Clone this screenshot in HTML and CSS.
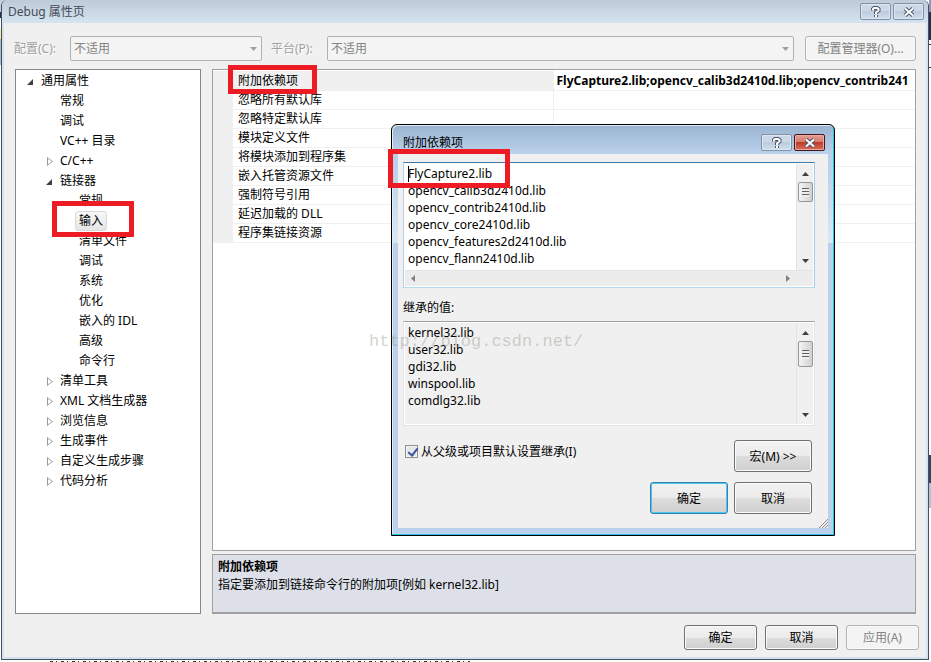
FILE: index.html
```html
<!DOCTYPE html>
<html lang="zh-CN">
<head>
  <meta charset="UTF-8">
  <meta name="viewport" content="width=device-width, initial-scale=1.0">
  <title>Debug 属性页</title>
  <link rel="stylesheet" href="styles.css">
</head>
<body>
  <main class="window">
    <header class="titlebar">
      <h1>Debug 属性页</h1>
      <div class="title-buttons">
        <button type="button" class="cap-btn" aria-label="帮助">
          <svg width="12" height="12" viewBox="0 0 12 12"><path class="halo" d="M3 4.5V3L4 2H7L8.5 3V4.5L6 6.5V8M6 9V11"/><path class="glyph" d="M3 4.5V3L4 2H7L8.5 3V4.5L6 6.5V8M6 9V11"/></svg>
        </button>
        <button type="button" class="cap-btn" aria-label="关闭">
          <svg width="12" height="12" viewBox="0 0 12 12"><path class="halo" d="M2 2.5L10 9.5M10 2.5L2 9.5"/><path class="glyph" d="M2 2.5L10 9.5M10 2.5L2 9.5"/></svg>
        </button>
      </div>
    </header>

    <!-- Configuration bar -->
    <div class="config-bar">
      <label for="config">配置(C):</label>
      <div class="combo combo-config">
        <select id="config" disabled><option>不适用</option></select>
        <svg width="7" height="4" viewBox="0 0 7 4"><path d="M0 0H7L3.5 4Z" fill="#a0a0a0"/></svg>
      </div>
      <label for="platform">平台(P):</label>
      <div class="combo combo-platform">
        <select id="platform" disabled><option>不适用</option></select>
        <svg width="7" height="4" viewBox="0 0 7 4"><path d="M0 0H7L3.5 4Z" fill="#a0a0a0"/></svg>
      </div>
      <button type="button" class="btn btn-manager" disabled>配置管理器(O)...</button>
    </div>

    <div class="content">
      <!-- Tree -->
      <nav class="tree">
        <ul>
          <li><div class="node open"><a href="#">通用属性</a></div>
            <ul>
              <li><div class="node"><a href="#">常规</a></div></li>
              <li><div class="node"><a href="#">调试</a></div></li>
              <li><div class="node"><a href="#">VC++ 目录</a></div></li>
              <li><div class="node closed"><a href="#">C/C++</a></div></li>
              <li><div class="node open"><a href="#">链接器</a></div>
                <ul>
                  <li><div class="node"><a href="#">常规</a></div></li>
                  <li><div class="node selected"><a href="#">输入</a><span class="mark mark-tree"></span></div></li>
                  <li><div class="node"><a href="#">清单文件</a></div></li>
                  <li><div class="node"><a href="#">调试</a></div></li>
                  <li><div class="node"><a href="#">系统</a></div></li>
                  <li><div class="node"><a href="#">优化</a></div></li>
                  <li><div class="node"><a href="#">嵌入的 IDL</a></div></li>
                  <li><div class="node"><a href="#">高级</a></div></li>
                  <li><div class="node"><a href="#">命令行</a></div></li>
                </ul>
              </li>
              <li><div class="node closed"><a href="#">清单工具</a></div></li>
              <li><div class="node closed"><a href="#">XML 文档生成器</a></div></li>
              <li><div class="node closed"><a href="#">浏览信息</a></div></li>
              <li><div class="node closed"><a href="#">生成事件</a></div></li>
              <li><div class="node closed"><a href="#">自定义生成步骤</a></div></li>
              <li><div class="node closed"><a href="#">代码分析</a></div></li>
            </ul>
          </li>
        </ul>
      </nav>

      <!-- Properties -->
      <section class="props">
        <div class="grid-box">
          <table class="grid">
            <colgroup><col class="col-gutter"><col class="col-name"><col></colgroup>
            <tbody>
              <tr class="current"><td></td><th scope="row">附加依赖项</th><td>FlyCapture2.lib;opencv_calib3d2410d.lib;opencv_contrib241</td></tr>
              <tr><td></td><th scope="row">忽略所有默认库</th><td></td></tr>
              <tr><td></td><th scope="row">忽略特定默认库</th><td></td></tr>
              <tr><td></td><th scope="row">模块定义文件</th><td></td></tr>
              <tr><td></td><th scope="row">将模块添加到程序集</th><td></td></tr>
              <tr><td></td><th scope="row">嵌入托管资源文件</th><td></td></tr>
              <tr><td></td><th scope="row">强制符号引用</th><td></td></tr>
              <tr><td></td><th scope="row">延迟加载的 DLL</th><td></td></tr>
              <tr><td></td><th scope="row">程序集链接资源</th><td></td></tr>
            </tbody>
          </table>
        </div>
        <div class="hint">
          <h2>附加依赖项</h2>
          <p>指定要添加到链接命令行的附加项[例如 kernel32.lib]</p>
        </div>
        <span class="mark mark-prop"></span>
      </section>
    </div>

    <footer class="footer">
      <button type="button" class="btn">确定</button>
      <button type="button" class="btn">取消</button>
      <button type="button" class="btn" disabled>应用(A)</button>
    </footer>
  </main>

  <!-- Additional dependencies dialog -->
  <div class="dialog" role="dialog" aria-labelledby="dialog-title">
    <header class="dialog-title">
      <h2 id="dialog-title">附加依赖项</h2>
      <div class="title-buttons">
        <button type="button" class="cap-btn" aria-label="帮助">
          <svg width="12" height="12" viewBox="0 0 12 12"><path class="halo" d="M3 4.5V3L4 2H7L8.5 3V4.5L6 6.5V8M6 9V11"/><path class="glyph" d="M3 4.5V3L4 2H7L8.5 3V4.5L6 6.5V8M6 9V11"/></svg>
        </button>
        <button type="button" class="cap-btn close" aria-label="关闭">
          <svg width="12" height="12" viewBox="0 0 12 12"><path class="halo" d="M2 2.5L10 9.5M10 2.5L2 9.5"/><path class="glyph" d="M2 2.5L10 9.5M10 2.5L2 9.5"/></svg>
        </button>
      </div>
    </header>
    <div class="dialog-body">
      <div class="textbox active">
        <div class="text-row">
          <textarea aria-label="附加依赖项" wrap="off" spellcheck="false">FlyCapture2.lib
opencv_calib3d2410d.lib
opencv_contrib2410d.lib
opencv_core2410d.lib
opencv_features2d2410d.lib
opencv_flann2410d.lib</textarea>
          <div class="vscroll">
            <svg width="7" height="4" viewBox="0 0 7 4"><path d="M0 4H7L3.5 0Z" fill="#404040"/></svg>
            <span class="thumb"></span>
            <svg width="7" height="4" viewBox="0 0 7 4"><path d="M0 0H7L3.5 4Z" fill="#404040"/></svg>
          </div>
        </div>
        <div class="hscroll">
          <svg width="4" height="7" viewBox="0 0 4 7"><path d="M4 0V7L0 3.5Z" fill="#808080"/></svg>
          <svg width="4" height="7" viewBox="0 0 4 7"><path d="M0 0V7L4 3.5Z" fill="#808080"/></svg>
        </div>
        <span class="caret"></span>
      </div>

      <label class="inherited-label" for="inherited">继承的值:</label>
      <div class="textbox">
        <div class="text-row">
          <textarea id="inherited" wrap="off" readonly>kernel32.lib
user32.lib
gdi32.lib
winspool.lib
comdlg32.lib</textarea>
          <div class="vscroll">
            <svg width="7" height="4" viewBox="0 0 7 4"><path d="M0 4H7L3.5 0Z" fill="#404040"/></svg>
            <span class="thumb"></span>
            <svg width="7" height="4" viewBox="0 0 7 4"><path d="M0 0H7L3.5 4Z" fill="#404040"/></svg>
          </div>
        </div>
      </div>

      <div class="inherit-row">
        <input type="checkbox" id="inherit" checked>
        <label for="inherit">从父级或项目默认设置继承(I)</label>
        <button type="button" class="btn">宏(M) &gt;&gt;</button>
      </div>
      <div class="dialog-actions">
        <button type="button" class="btn default">确定</button>
        <button type="button" class="btn">取消</button>
      </div>
      <svg class="grip" width="9" height="9" viewBox="0 0 9 9"><path d="M0 9L9 0M3 9L9 3M6 9L9 6" stroke="#8c8c8c"/></svg>
    </div>
    <span class="mark mark-dialog"></span>
    <span class="watermark">http://blog.csdn.net/</span>
  </div>
</body>
</html>
```
FILE: styles.css
```css
* {
  box-sizing: border-box;
}

body {
  margin: 0;
  min-height: 100vh;
  padding: 0 2px 2px 1px;
  display: flex;
  background:
    linear-gradient(#8d9ab8 0 12px, #1f3150 12px 40px, #fff 40px 44px, #1f3150 44px 45px, #fff 45px 67px, #1f3150 67px 68px, #fff 68px 455px, #2f4468 455px 483px, #b4c1d6 483px 508px, #fff 508px) right top / 2px 100% no-repeat,
    linear-gradient(#c5cede 0 12px, #1f3150 12px 18px, #fff 18px 28px, #ffe8a0 28px 39px, #a9b7cb 39px 65px, #fff 65px) left top / 8px 100% no-repeat,
    repeating-linear-gradient(90deg, #333 0 3px, #fff 3px 6px, #333 6px 7px, #fff 7px 11px) 50px bottom / 420px 1px no-repeat,
    #fff;
  color: #000;
  font-family: "Noto Sans", "Noto Sans CJK SC", sans-serif;
  font-size: 12px;
  line-height: 17px;
}

h1, h2, p, ul {
  margin: 0;
  padding: 0;
  font-size: 12px;
  font-weight: normal;
}

ul {
  list-style: none;
}

a {
  color: inherit;
  text-decoration: none;
}

svg {
  display: block;
  flex: none;
}

button, select, textarea {
  font: inherit;
  color: inherit;
}

/* Main window */
.window {
  flex: 1;
  min-width: 0;
  display: flex;
  flex-direction: column;
  background: #f0f0f0;
  border: 1px solid #45505c;
  border-top: 0;
  border-radius: 6px 6px 0 0;
  box-shadow: inset 0 0 0 2px #d5e2f0;
}

.titlebar {
  display: flex;
  align-items: center;
  justify-content: space-between;
  height: 23px;
  padding: 0 4px 0 6px;
  border-radius: 6px 6px 0 0;
  background: linear-gradient(#bdcbd9, #d6e3f1);
  color: #444c55;
}

.title-buttons {
  display: flex;
  gap: 2px;
}

.cap-btn {
  display: flex;
  align-items: center;
  justify-content: center;
  width: 31px;
  height: 17px;
  padding: 0;
  border: 1px solid #8291a8;
  border-radius: 2px;
  background: linear-gradient(#cbd8e6 50%, #bccbdd 50%, #d0deec);
  box-shadow: inset 0 0 0 1px #dce7f2;
}

.halo {
  fill: none;
  stroke: #4c566b;
  stroke-width: 4;
}

.glyph {
  fill: none;
  stroke: #fff;
  stroke-width: 2;
}

.config-bar {
  display: flex;
  align-items: center;
  padding: 13px 12px 8px 12px;
  color: #a0a0a0;
}

.config-bar label {
  width: 56px;
  text-shadow: 1px 1px #fff;
}

.combo {
  position: relative;
}

.combo-config {
  width: 192px;
  margin-right: 9px;
}

.combo-platform {
  flex: 1;
  margin-right: 11px;
}

.combo select {
  appearance: none;
  display: block;
  width: 100%;
  height: 25px;
  padding: 0 3px;
  border: 1px solid #adb2b5;
  border-radius: 2px;
  background: #f4f4f4;
  color: #838383;
  opacity: 1;
}

.combo svg {
  position: absolute;
  right: 5px;
  top: 11px;
}

.btn {
  width: 73px;
  height: 25px;
  padding: 0;
  border: 1px solid #707070;
  border-radius: 3px;
  background: linear-gradient(#f2f2f2, #ebebeb 50%, #dddddd 50%, #cfcfcf);
  box-shadow: inset 0 0 0 1px #fafafa;
}

.btn:disabled {
  border-color: #adb2b5;
  background: #f4f4f4;
  color: #838383;
}

.btn-manager {
  width: 111px;
}

.content {
  flex: 1;
  display: flex;
  gap: 11px;
  padding: 0 12px 0 13px;
}

/* Tree */
.tree {
  width: 186px;
  padding-top: 1px;
  border: 1px solid #828790;
  background: #fff;
}

.tree ul ul {
  padding-left: 19px;
}

.node {
  position: relative;
  display: flex;
  height: 20px;
  align-items: center;
  padding-left: 21px;
}

.node a {
  padding: 0 4px;
  line-height: 18px;
}

.open::before,
.closed::before {
  content: "";
  position: absolute;
  left: 11px;
  top: 8px;
  width: 6px;
  height: 6px;
  background: #404040;
  clip-path: polygon(100% 0, 100% 100%, 0 100%);
}

.closed::before {
  left: 12px;
  top: 6px;
  width: 6px;
  height: 9px;
  background: #999;
  clip-path: polygon(0 0, 100% 50%, 0 100%, 0 15%, 1px 20%, 1px 80%, 80% 50%, 1px 20%, 0 15%);
}

.selected a {
  border: 1px solid #d9d9d9;
  border-radius: 3px;
  background: linear-gradient(#f8f8f8, #e5e5e5);
  padding: 0 3px;
}

/* Property grid */
.props {
  position: relative;
  flex: 1;
  min-width: 0;
  display: flex;
  flex-direction: column;
  gap: 3px;
}

.grid-box {
  flex: 1;
  overflow: hidden;
  border: 1px solid #a0a0a0;
  background: #fff;
  padding-top: 1px;
}

.grid {
  width: 100%;
  table-layout: fixed;
  border-collapse: collapse;
}

.col-gutter {
  width: 20px;
}

.col-name {
  width: 320px;
}

.grid th,
.grid td {
  height: 19px;
  padding: 0 0 0 3px;
  border-bottom: 1px solid #f0f0f0;
  font-weight: normal;
  text-align: left;
  white-space: nowrap;
}

.grid th {
  padding-left: 5px;
  border-right: 1px solid #f0f0f0;
}

.grid td:first-child,
.grid .current th {
  background: #f0f0f0;
}

.grid .current td {
  font-weight: bold;
}

.hint {
  height: 60px;
  padding: 3px 5px;
  border: 1px solid #a0a0a0;
  border-bottom-width: 2px;
  background: #dde0e8;
  line-height: 18px;
}

.hint h2 {
  font-weight: bold;
}

.footer {
  display: flex;
  justify-content: flex-end;
  gap: 8px;
  padding: 11px 9px 9px;
}

/* Dialog */
.dialog {
  position: absolute;
  left: 391px;
  top: 124px;
  width: 444px;
  padding: 0 6px 7px;
  border: 1px solid #000;
  border-radius: 6px 6px 0 0;
  background: linear-gradient(#9ab3d0, #b9d1ea 28px, #b9d1ea 40px, #dbe8f6 118px, #b9d1ea 118px);
  box-shadow: inset -1px -1px #2cc4dc, inset 1px 1px #e4eef8;
}

.dialog-title {
  display: flex;
  align-items: center;
  justify-content: space-between;
  height: 29px;
  padding: 6px 3px 0 5px;
}

.close {
  border-color: #4a1420;
  background: linear-gradient(#e3a094, #d5786a 50%, #bd3c27 50%, #d4705c);
  box-shadow: inset 0 0 0 1px #e8aca2;
}

.dialog-body {
  position: relative;
  padding: 8px 13px 14px 5px;
  background: #f0f0f0;
}

.textbox {
  position: relative;
  padding: 1px;
  border: 1px solid #e3e3e8;
  border-top-color: #a0a0a0;
  box-shadow: inset 0 0 0 1px #fff;
}

.textbox.active {
  border-color: #3d7bad #a4c9e3 #b7d9ed #b5cfe7;
  background: #fff;
}

.text-row {
  display: flex;
  height: 101px;
}

.active .text-row {
  height: 106px;
}

.textbox textarea {
  flex: 1;
  min-width: 0;
  padding: 1px 3px;
  border: 0;
  outline: 0;
  resize: none;
  overflow: hidden;
  background: transparent;
}

.vscroll {
  display: flex;
  flex-direction: column;
  align-items: center;
  width: 17px;
  padding: 8px 1px 7px;
  background: #f0f0f0;
  border-left: 1px solid #e3e3e3;
}

.vscroll svg:last-child {
  margin-top: auto;
}

.thumb {
  width: 15px;
  height: 26px;
  margin-top: 6px;
  border: 1px solid #979797;
  border-radius: 2px;
  background:
    repeating-linear-gradient(#606060 0 1px, #eee 1px 3px) center / 7px 9px no-repeat,
    linear-gradient(90deg, #f5f5f5, #d0d0d4);
}

.active .thumb {
  height: 20px;
}

.hscroll {
  display: flex;
  align-items: center;
  justify-content: space-between;
  height: 16px;
  padding: 0 23px 0 6px;
  border-top: 1px solid #e3e3e3;
  background: #ececec;
}

.caret {
  position: absolute;
  left: 4px;
  top: 3px;
  width: 1px;
  height: 16px;
  background: #000;
}

.inherited-label {
  display: block;
  margin: 11px 0 5px;
}

.inherit-row {
  display: flex;
  align-items: center;
  margin-top: 14px;
  padding-right: 3px;
}

.inherit-row input {
  appearance: none;
  width: 13px;
  height: 13px;
  margin: 0 3px 10px 2px;
  border: 1px solid #8e8f8f;
  background: #e4e8ee;
  box-shadow: inset 0 0 0 1px #f4f4f4;
}

.inherit-row input:checked::before {
  content: "";
  display: block;
  width: 4px;
  height: 8px;
  margin: 0 0 0 4px;
  border: solid #3c5499;
  border-width: 0 2px 2px 0;
  transform: rotate(38deg);
}

.inherit-row label {
  margin-bottom: 10px;
}

.dialog .btn {
  width: 78px;
  height: 32px;
}

.inherit-row .btn {
  margin-left: auto;
}

.dialog-actions {
  display: flex;
  justify-content: flex-end;
  gap: 6px;
  margin-top: 10px;
  padding-right: 3px;
}

.dialog .default {
  border-color: #3c7fb1;
  box-shadow: inset 0 0 0 1px #48c8ee;
}

.grip {
  position: absolute;
  right: 0;
  bottom: 0;
}

/* Red annotation frames */
.mark {
  position: absolute;
  border: 5px solid #ed1c24;
  pointer-events: none;
}

.mark-tree {
  left: -2px;
  top: -10px;
  width: 82px;
  height: 36px;
  z-index: 1;
}

.mark-prop {
  left: 16px;
  top: -4px;
  width: 89px;
  height: 29px;
}

.mark-dialog {
  left: -4px;
  top: 24px;
  width: 122px;
  height: 39px;
}

.watermark {
  position: absolute;
  left: -23px;
  top: 204px;
  color: rgba(128, 128, 112, 0.35);
  font-family: "Liberation Mono", monospace;
  font-size: 17px;
  line-height: 26px;
  pointer-events: none;
}
```
